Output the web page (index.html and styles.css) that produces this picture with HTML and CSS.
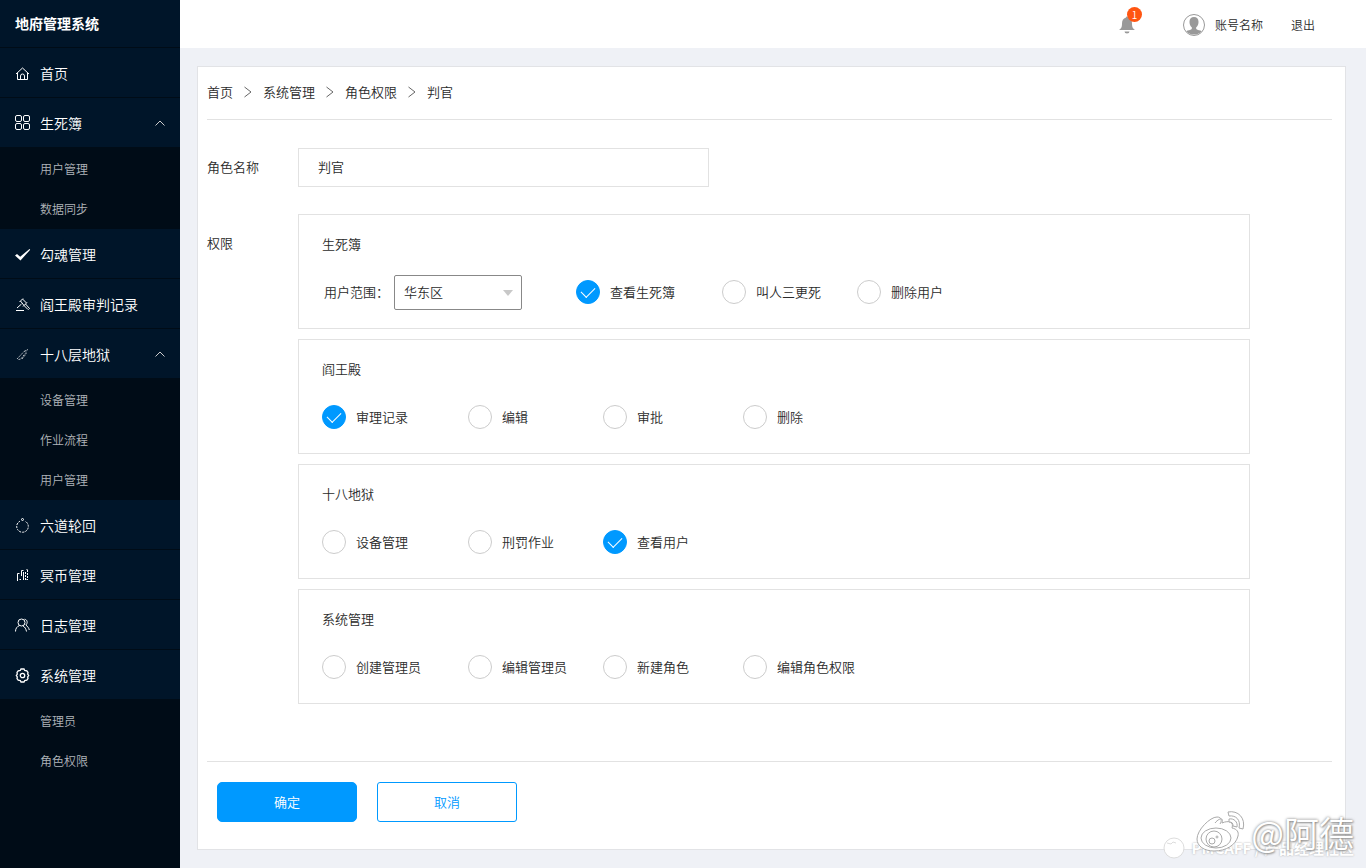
FILE: index.html
```html
<!DOCTYPE html>
<html lang="zh-CN">
<head>
  <meta charset="UTF-8" />
  <meta name="viewport" content="width=device-width, initial-scale=1.0"/>
  <title>地府管理系统</title>
  <link rel="stylesheet" href="styles.css">
</head>
<body>
  <aside class="sidebar">
    <h1 class="logo">地府管理系统</h1>
    <nav>
      <a class="menu-item" href="#">
        <svg class="icon" viewBox="0 0 16 16"><path d="M1 9 7.500 3 14 9M2.500 8v6.500h10V8M5.500 14.500V11a2 2 0 0 1 4 0v3.500"/></svg>
        首页
      </a>
      <a class="menu-item" href="#">
        <svg class="icon" viewBox="0 0 16 16"><rect x=".5" y=".5" width="6" height="6" rx="1.500"/><rect x="8.500" y=".5" width="6" height="6" rx="1.500"/><rect x=".5" y="8.500" width="6" height="6" rx="1.500"/><rect x="8.500" y="8.500" width="6" height="6" rx="1.500"/></svg>
        生死簿
        <svg class="arrow" viewBox="0 0 10 6"><path d="M.5 5.500 5 1l4.500 4.500"/></svg>
      </a>
      <div class="submenu">
        <a href="#">用户管理</a>
        <a href="#">数据同步</a>
      </div>
      <a class="menu-item" href="#">
        <svg class="icon" viewBox="0 0 16 16"><path class="solid" d="M0 9.500 2 8l3.200 2.700L14.500 3l.7.700L5.500 14.500z"/></svg>
        勾魂管理
      </a>
      <a class="menu-item" href="#">
        <svg class="icon" viewBox="0 0 16 16"><path d="M1 14.500h8M4.500 6 8 2.500M8 10.500 12 6.500M5.500 5l3.500 4.500M7.500 3l4 4M6.500 8 2 12M9 9.500l4 4M10.500 8l4 4.500-1 1"/></svg>
        阎王殿审判记录
      </a>
      <a class="menu-item" href="#">
        <svg class="icon" viewBox="0 0 16 16"><path class="thin" d="M2 13 9 5.500M3.500 13.500l2.500-.5 4-5.500M7 13l4-5V4.500M9 5.500l4-2"/></svg>
        十八层地狱
        <svg class="arrow" viewBox="0 0 10 6"><path d="M.5 5.500 5 1l4.500 4.500"/></svg>
      </a>
      <div class="submenu">
        <a href="#">设备管理</a>
        <a href="#">作业流程</a>
        <a href="#">用户管理</a>
      </div>
      <a class="menu-item" href="#">
        <svg class="icon" viewBox="0 0 16 16"><path class="dash" d="M5 4.200a5.800 5.800 0 1 0 5 0"/><circle cx="7.500" cy="2.500" r="1"/></svg>
        六道轮回
      </a>
      <a class="menu-item" href="#">
        <svg class="icon" viewBox="0 0 16 16"><path d="M4.500 6.500h-2V14M4.500 12.500h1.500M8.500 3.500h-2V9M8.500 5v8M11.500 2.500h1M11.500 12.500h1"/><path class="dash" d="M10.500 5v8M12.500 3v10"/></svg>
        冥币管理
      </a>
      <a class="menu-item" href="#">
        <svg class="icon" viewBox="0 0 16 16"><circle cx="6.500" cy="5.500" r="3.500"/><path d="M.5 14.500c0-3 1.500-5 4-6M8 9c2 1 3 3 3.500 5.500M9.500 2.200c3 .3 3.500 4 1.300 5.800 2 1.500 3 3 3.500 5"/></svg>
        日志管理
      </a>
      <a class="menu-item" href="#">
        <svg class="icon" viewBox="0 0 16 16"><path class="gear" d="M6 2h3l.7 1.500 2.100.3L13 5.500 12.700 7l1 1.500-1 1.500.3 1.500-1.200 1.700-2.100.3L9 15H6l-.7-1.500-2.100-.3L2 11.500l.3-1.500-1-1.500 1-1.500L2 5.500l1.200-1.700 2.100-.3z"/><circle class="gear" cx="7.500" cy="8.500" r="2.200"/></svg>
        系统管理
      </a>
      <div class="submenu">
        <a href="#">管理员</a>
        <a href="#">角色权限</a>
      </div>
    </nav>
  </aside>

  <div class="main">
    <header class="topbar">
      <a class="notice" href="#" aria-label="通知">
        <svg class="bell" viewBox="0 0 16 18"><path d="M7 1.500a1 1 0 0 1 2 0C12 2.500 13 4.500 13 7.500c0 4 1 5 3 6.500H0c2-1.500 3-2.500 3-6.500 0-3 1-5 4-6zM5.500 15.500h5a2.500 2 0 0 1-5 0z"/></svg>
        <span class="badge">1</span>
      </a>
      <a class="account" href="#">
        <svg class="avatar" viewBox="0 0 22 22"><circle cx="11" cy="11" r="10.500" fill="#fff" stroke="#999"/><path fill="#999" d="M11 3c3 0 4.700 2 4.500 5.200-.1 2.500-1 4-2.300 5.100v1.700c1.500 1 3.800 1.300 5.500 2.200A10.500 10.500 0 0 1 3.300 17.200c1.700-.9 4-1.200 5.500-2.200v-1.700C7.500 12.200 6.600 10.700 6.500 8.200 6.300 5 8 3 11 3z"/></svg>
        账号名称
      </a>
      <a href="#">退出</a>
    </header>

    <form class="card">
      <nav class="crumbs">
        <a href="#">首页</a>
        <svg viewBox="0 0 8 12"><path d="M.5 1 7 6 .5 11"/></svg>
        <a href="#">系统管理</a>
        <svg viewBox="0 0 8 12"><path d="M.5 1 7 6 .5 11"/></svg>
        <a href="#">角色权限</a>
        <svg viewBox="0 0 8 12"><path d="M.5 1 7 6 .5 11"/></svg>
        <span>判官</span>
      </nav>

      <div class="form-row">
        <label class="form-label" for="roleName">角色名称</label>
        <input class="text-input" type="text" id="roleName" value="判官">
      </div>

      <div class="form-row">
        <span class="form-label panel-label">权限</span>
        <div class="panels">
          <section class="panel">
            <h2>生死簿</h2>
            <div class="options with-range">
              <div class="range">
                <label for="range">用户范围：</label>
                <span class="select-box">
                  <select id="range">
                    <option>华东区</option>
                  </select>
                </span>
              </div>
              <label class="option"><input type="checkbox" checked>查看生死簿</label>
              <label class="option"><input type="checkbox">叫人三更死</label>
              <label class="option"><input type="checkbox">删除用户</label>
            </div>
          </section>
          <section class="panel">
            <h2>阎王殿</h2>
            <div class="options">
              <label class="option"><input type="checkbox" checked>审理记录</label>
              <label class="option"><input type="checkbox">编辑</label>
              <label class="option"><input type="checkbox">审批</label>
              <label class="option"><input type="checkbox">删除</label>
            </div>
          </section>
          <section class="panel">
            <h2>十八地狱</h2>
            <div class="options">
              <label class="option"><input type="checkbox">设备管理</label>
              <label class="option"><input type="checkbox">刑罚作业</label>
              <label class="option"><input type="checkbox" checked>查看用户</label>
            </div>
          </section>
          <section class="panel">
            <h2>系统管理</h2>
            <div class="options">
              <label class="option"><input type="checkbox">创建管理员</label>
              <label class="option"><input type="checkbox">编辑管理员</label>
              <label class="option"><input type="checkbox">新建角色</label>
              <label class="option"><input type="checkbox">编辑角色权限</label>
            </div>
          </section>
        </div>
      </div>

      <div class="actions">
        <button type="button" class="btn btn-primary">确定</button>
        <button type="button" class="btn">取消</button>
      </div>
    </form>
  </div>

  <div class="watermark">
    <div class="mark-site">
      <svg viewBox="0 0 24 24"><circle cx="12" cy="12" r="10"/><path d="M5 7l4 1 2-2 3 1"/></svg>
      <span>PMCAFF / 产品经理社区</span>
    </div>
    <div class="mark-user">
      <svg viewBox="0 0 52 44"><path d="M20 13c4-5 9-6 7 0 7-3 12-1 10 5 5 1 7 4 6 8-2 9-12 15-24 15C9 41 2 36 2 29 2 20 15 7 22 7c5 0 5 4 3 7"/><ellipse cx="21" cy="28" rx="15" ry="10"/><circle cx="19" cy="29" r="8"/><circle cx="17" cy="31" r="3"/><circle cx="22" cy="27" r="1"/><path d="M33 2c10-2 18 6 15 17l-4-1c2-8-3-13-10-12zM34 9c5-1 9 3 8 8l-4-1c0-3-1-4-4-4z"/></svg>
      <span>@阿德</span>
    </div>
  </div>
</body>
</html>
```
FILE: styles.css
```css
* {
  box-sizing: border-box;
}
body {
  display: flex;
  min-height: 100vh;
  margin: 0;
  position: relative;
  background: #eff1f6;
  color: #2b2b2b;
  font-family: 'Noto Sans CJK SC', sans-serif;
  font-size: 13px;
  font-weight: 350;
  line-height: 20px;
}
a {
  color: inherit;
  text-decoration: none;
}
svg {
  display: block;
  flex: none;
  fill: none;
}

/* sidebar */
.sidebar {
  flex: none;
  width: 180px;
  background: #000c17;
  color: #fff;
}
.logo {
  height: 48px;
  margin: 0;
  padding-left: 15px;
  background: #001529;
  border-bottom: 1px solid #000c17;
  font-size: 14px;
  font-weight: bold;
  line-height: 46px;
}
.menu-item {
  display: flex;
  align-items: center;
  gap: 9px;
  height: 50px;
  padding: 0 15px;
  background: #001529;
  border-bottom: 1px solid #000c17;
  font-size: 14px;
}
.icon {
  width: 16px;
  height: 16px;
  stroke: #fff;
}
.icon .solid {
  fill: #fff;
  stroke: none;
}
.icon .thin {
  stroke-width: .7;
  stroke-dasharray: 2 1;
}
.icon .dash {
  stroke-dasharray: 2 1;
}
.icon .gear {
  stroke-width: 1.3;
}
.arrow {
  width: 10px;
  height: 6px;
  margin-left: auto;
  stroke: #ccc;
}
.submenu {
  padding-top: 1px;
}
.submenu a {
  display: block;
  padding-left: 40px;
  color: #b0b5ba;
  font-size: 12px;
  line-height: 40px;
}

/* top bar */
.main {
  flex: 1;
  min-width: 0;
}
.topbar {
  display: flex;
  justify-content: flex-end;
  align-items: center;
  gap: 28px;
  height: 48px;
  padding: 2px 51px 0 0;
  background: #fff;
  font-size: 12px;
}
.notice {
  position: relative;
  margin-right: 20px;
}
.bell {
  width: 16px;
  height: 18px;
  fill: #999;
}
.badge {
  position: absolute;
  top: -9px;
  right: -7px;
  width: 15px;
  height: 15px;
  border-radius: 50%;
  background: #ff5511;
  color: #fff;
  font-size: 10px;
  line-height: 15px;
  text-align: center;
}
.account {
  display: flex;
  align-items: center;
  gap: 10px;
}
.avatar {
  width: 22px;
  height: 22px;
}

/* content */
.card {
  margin: 18px 20px 18px 17px;
  padding: 0 13px 27px 9px;
  background: #fff;
  border: 1px solid #e2e3e6;
}
.crumbs {
  display: flex;
  align-items: center;
  gap: 11px;
  height: 53px;
  padding-bottom: 2px;
  border-bottom: 1px solid #e2e2e2;
  margin-bottom: 28px;
}
.crumbs svg {
  width: 8px;
  height: 12px;
  stroke: #666;
}
.form-row {
  display: flex;
  margin-bottom: 27px;
}
.form-label {
  flex: none;
  width: 91px;
  line-height: 38px;
}
.panel-label {
  line-height: 58px;
}
.text-input {
  width: 411px;
  height: 39px;
  padding: 0 19px 2px;
  border: 1px solid #e2e2e2;
  background: #fff;
  color: inherit;
  font: inherit;
}
.panels {
  display: flex;
  flex: 1;
  flex-direction: column;
  gap: 10px;
  margin-right: 82px;
}
.panel {
  padding: 19px 23px 18px;
  border: 1px solid #e2e2e2;
}
.panel h2 {
  margin: 0 0 20px;
  font-size: 13px;
  font-weight: inherit;
}
.options {
  display: grid;
  grid-template-columns: 146px 135px 140px auto;
  align-items: center;
  height: 36px;
}
.with-range {
  grid-template-columns: 254px 146px 135px auto;
}
.range {
  display: flex;
  align-items: center;
  padding-left: 2px;
}
.range label {
  width: 70px;
  white-space: nowrap;
}
.select-box {
  position: relative;
}
.select-box::after {
  content: "";
  position: absolute;
  top: 15px;
  right: 9px;
  border: 5px solid transparent;
  border-top: 6px solid #c8c8c8;
  border-bottom: 0;
  pointer-events: none;
}
select {
  display: block;
  width: 128px;
  height: 35px;
  padding: 0 9px;
  appearance: none;
  border: 1px solid #888;
  border-radius: 2px;
  background: #fff;
  color: inherit;
  font: inherit;
}
.option {
  display: flex;
  align-items: center;
  gap: 10px;
  white-space: nowrap;
}
.option input {
  display: grid;
  flex: none;
  width: 24px;
  height: 24px;
  margin: 0;
  appearance: none;
  border: 1px solid #ccc;
  border-radius: 50%;
}
.option input:checked {
  border-color: #0099ff;
  background: #0099ff;
}
.option input:checked::before {
  content: "";
  place-self: center;
  width: 7px;
  height: 12px;
  margin-bottom: 4px;
  border: solid #fff;
  border-width: 0 1px 1px 0;
  transform: rotate(45deg);
}
.actions {
  display: flex;
  gap: 20px;
  margin-top: 57px;
  padding: 20px 10px 0;
  border-top: 1px solid #e2e2e2;
}
.btn {
  width: 140px;
  height: 40px;
  border: 1px solid #0099ff;
  border-radius: 3px;
  background: #fff;
  color: #0099ff;
  font: inherit;
  cursor: pointer;
}
.btn-primary {
  border-radius: 5px;
  background: #0099ff;
  color: #fff;
}

/* watermark in the corner */
.watermark {
  position: absolute;
  right: 12px;
  bottom: 8px;
  width: 192px;
  height: 52px;
  color: #fff;
  pointer-events: none;
}
.watermark svg {
  fill: #fff;
  stroke: #aaa;
}
.mark-site {
  position: absolute;
  right: 0;
  bottom: 0;
  display: flex;
  align-items: center;
  gap: 6px;
  font-size: 15px;
  font-weight: bold;
  white-space: nowrap;
  text-shadow: 0 0 2px #aaa;
}
.mark-site svg {
  width: 24px;
  height: 24px;
  stroke: #ddd;
}
.mark-user {
  position: absolute;
  right: 0;
  bottom: 6px;
  display: flex;
  align-items: center;
  gap: 4px;
  font-size: 35px;
  line-height: 44px;
  white-space: nowrap;
  text-shadow: 0 0 3px #777, 1px 1px 2px #aaa;
}
.mark-user svg {
  width: 52px;
  height: 44px;
}
```
